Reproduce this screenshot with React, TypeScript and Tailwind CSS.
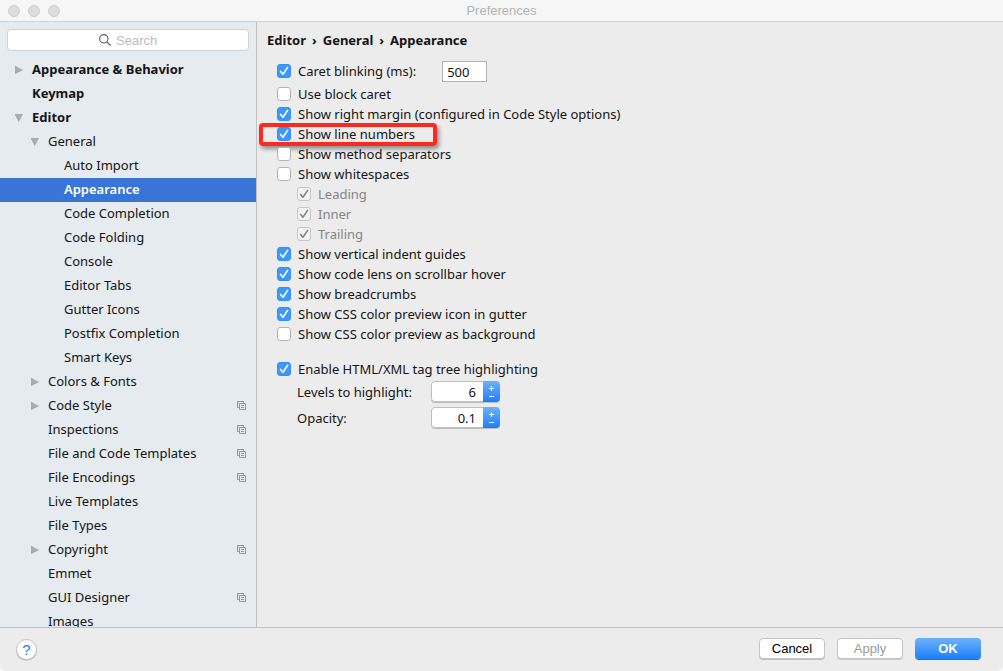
import React, { useState } from 'react';
import clsx from 'clsx';

interface TreeNode {
  label: string;
  level: 0 | 1 | 2;
  arrow?: 'open' | 'closed';
  project?: boolean;
}

const tree: TreeNode[] = [
  { label: 'Appearance & Behavior', level: 0, arrow: 'closed' },
  { label: 'Keymap', level: 0 },
  { label: 'Editor', level: 0, arrow: 'open' },
  { label: 'General', level: 1, arrow: 'open' },
  { label: 'Auto Import', level: 2 },
  { label: 'Appearance', level: 2 },
  { label: 'Code Completion', level: 2 },
  { label: 'Code Folding', level: 2 },
  { label: 'Console', level: 2 },
  { label: 'Editor Tabs', level: 2 },
  { label: 'Gutter Icons', level: 2 },
  { label: 'Postfix Completion', level: 2 },
  { label: 'Smart Keys', level: 2 },
  { label: 'Colors & Fonts', level: 1, arrow: 'closed' },
  { label: 'Code Style', level: 1, arrow: 'closed', project: true },
  { label: 'Inspections', level: 1, project: true },
  { label: 'File and Code Templates', level: 1, project: true },
  { label: 'File Encodings', level: 1, project: true },
  { label: 'Live Templates', level: 1 },
  { label: 'File Types', level: 1 },
  { label: 'Copyright', level: 1, arrow: 'closed', project: true },
  { label: 'Emmet', level: 1 },
  { label: 'GUI Designer', level: 1, project: true },
  { label: 'Images', level: 1 },
];

const indent = { 0: 'pl-3', 1: 'pl-7', 2: 'pl-11' };

const Arrow: React.FC<{ type?: 'open' | 'closed' }> = ({ type }) => (
  <span className="flex w-5 shrink-0 items-center pl-0.5">
    {type && (
      <svg width="10" height="10" viewBox="0 0 10 10" fill="#a9abad">
        <path d={type === 'open' ? 'M0.5 1h8.5l-4.25 8z' : 'M1 0.8v8.4l8-4.2z'} />
      </svg>
    )}
  </span>
);

const ProjectIcon = () => (
  <svg width="10" height="10" viewBox="0 0 10 10" fill="none" className="shrink-0">
    <path d="M2 6.5H0.5v-6h6V2" stroke="#6c9fc0" />
    <path d="M2.5 2.5h6v6h-6z" stroke="#96999c" />
    <path d="M4 4.5h3M4 6.5h3" stroke="#96999c" />
  </svg>
);

interface CheckProps {
  label: string;
  checked?: boolean;
  disabled?: boolean;
  children?: React.ReactNode;
}

const Check: React.FC<CheckProps> = ({ label, checked = false, disabled = false, children }) => {
  const [on, setOn] = useState(checked);

  return (
    <label className={clsx('relative flex h-5 w-fit items-center gap-[7px]', disabled && 'ml-5 text-[#858585]')}>
      <span className="grid size-3.5">
        <input
          type="checkbox"
          checked={on}
          disabled={disabled}
          onChange={() => setOn(!on)}
          className="col-start-1 row-start-1 size-3.5 appearance-none rounded-[3px] border border-[#b4b4b4] bg-white checked:border-[#3a90f2] checked:bg-[#3b99fc] disabled:border-[#c6c6c6] disabled:bg-[#f3f3f3]"
        />
        {on && (
          <svg viewBox="0 0 14 14" fill="none" className="pointer-events-none col-start-1 row-start-1 size-3.5">
            <path
              d="M3.6 7.4L6 10.2L10.6 3.4"
              stroke={disabled ? '#858585' : '#fff'}
              strokeWidth="1.6"
              strokeLinecap="round"
              strokeLinejoin="round"
            />
          </svg>
        )}
      </span>
      {label}
      {children}
    </label>
  );
};

const Spinner: React.FC<{ id: string; label: string; initial: number; step: number }> = ({ id, label, initial, step }) => {
  const [value, setValue] = useState(initial);
  const change = (delta: number) => setValue(Math.max(0, Math.round((value + delta) * 10) / 10));

  return (
    <div className="flex items-center pl-5">
      <label htmlFor={id} className="w-[134px]">{label}</label>
      <div className="flex h-[21px] w-[69px] overflow-hidden rounded-[4px] shadow-[0_1px_0_#bdbdbd]">
        <input
          id={id}
          value={value}
          onChange={(e) => setValue(Number(e.target.value) || 0)}
          className="w-[52px] rounded-l-[4px] border border-r-0 border-[#bfbfbf] bg-white pr-[7px] text-right outline-none"
        />
        <div className="flex w-[17px] flex-col bg-linear-to-b from-[#6bb2fa] to-[#167efb] pt-[3px] pb-0.5 text-white">
          <button aria-label={`Increase ${label}`} className="flex flex-1 items-center justify-center" onClick={() => change(step)}>
            <svg width="7" height="7" viewBox="0 0 7 7" stroke="currentColor"><path d="M1 3.5h5M3.5 1v5" /></svg>
          </button>
          <button aria-label={`Decrease ${label}`} className="flex flex-1 items-center justify-center" onClick={() => change(-step)}>
            <svg width="7" height="7" viewBox="0 0 7 7" stroke="currentColor"><path d="M1 3.5h5" /></svg>
          </button>
        </div>
      </div>
    </div>
  );
};

const App: React.FC = () => {
  const [selected, setSelected] = useState('Appearance');
  const [blink, setBlink] = useState('500');

  return (
    <div className="flex h-screen flex-col overflow-hidden rounded-b-[5px] bg-[#ececec] font-['Noto_Sans',sans-serif] text-[13px] leading-5 text-[#141414]">
      <header className="grid h-[22px] shrink-0 grid-cols-[1fr_auto_1fr] items-center border-b border-[#d1d1d1] bg-[#f6f6f6] px-2">
        <div className="flex gap-2">
          {['Close', 'Minimize', 'Zoom'].map((name) => (
            <button key={name} aria-label={name} className="size-3 rounded-full border border-[#cdcdcd] bg-[#dddddd]" />
          ))}
        </div>
        <h1 className="pt-px font-['Liberation_Sans',Arial,sans-serif] text-[13px] text-[#b3b3b3]">Preferences</h1>
      </header>

      <div className="flex min-h-0 flex-1">
        <aside className="flex w-[257px] shrink-0 flex-col border-r border-[#c2c2c2] bg-[#e6ebef]">
          <label className="m-[7px] flex h-[22px] shrink-0 items-center justify-center gap-[5px] rounded-[4px] border border-[#cfd1d3] bg-white pl-[3px]">
            <svg width="12" height="12" viewBox="0 0 12 12" fill="none" stroke="#5c5c5c" strokeWidth="1.1">
              <circle cx="4.8" cy="4.8" r="4.2" />
              <path d="M7.9 7.9l3.6 3.6" />
            </svg>
            <input
              aria-label="Search"
              placeholder="Search"
              className="w-11 bg-transparent pt-px font-['Liberation_Sans',Arial,sans-serif] text-[13px] outline-none placeholder:text-[#bcbcbc]"
            />
          </label>
          <nav className="min-h-0 flex-1 overflow-y-auto [scrollbar-width:none]">
            {tree.map((node) => (
              <button
                key={node.label}
                onClick={() => setSelected(node.label)}
                className={clsx(
                  'flex h-6 w-full items-center pr-[9px] text-left',
                  indent[node.level],
                  node.level === 0 && 'font-bold',
                  selected === node.label && 'bg-[#3875d7] font-semibold text-white'
                )}
              >
                <Arrow type={node.arrow} />
                <span className="flex-1 pb-0.5">{node.label}</span>
                {node.project && <ProjectIcon />}
              </button>
            ))}
          </nav>
        </aside>

        <main className="min-w-0 flex-1 overflow-hidden px-2.5 pt-2">
          <h2 className="flex gap-1.5 font-bold">
            <span>Editor</span>
            <span>›</span>
            <span>General</span>
            <span>›</span>
            <span>Appearance</span>
          </h2>
          <div className="mt-[11px] pl-2.5">
            <div className="mb-0.5 flex h-[21px] items-start gap-[26px]">
              <Check label="Caret blinking (ms):" checked />
              <input
                aria-label="Caret blinking (ms)"
                value={blink}
                onChange={(e) => setBlink(e.target.value)}
                className="h-[21px] w-[45px] border border-[#b3b3b3] bg-white px-1 outline-none"
              />
            </div>
            <Check label="Use block caret" />
            <Check label="Show right margin (configured in Code Style options)" checked />
            <Check label="Show line numbers" checked>
              <span className="pointer-events-none absolute -top-px -left-[18px] h-[23px] w-[178px] rounded-[4px] border-4 border-[#fb2a20] shadow-[2px_3px_4px_rgba(0,0,0,0.4)]" />
            </Check>
            <Check label="Show method separators" />
            <Check label="Show whitespaces" />
            <Check label="Leading" checked disabled />
            <Check label="Inner" checked disabled />
            <Check label="Trailing" checked disabled />
            <Check label="Show vertical indent guides" checked />
            <Check label="Show code lens on scrollbar hover" checked />
            <Check label="Show breadcrumbs" checked />
            <Check label="Show CSS color preview icon in gutter" checked />
            <Check label="Show CSS color preview as background" />
            <div className="mt-[15px] mb-0.5">
              <Check label="Enable HTML/XML tag tree highlighting" checked />
            </div>
            <div className="flex flex-col gap-[5px]">
              <Spinner id="levels" label="Levels to highlight:" initial={6} step={1} />
              <Spinner id="opacity" label="Opacity:" initial={0.1} step={0.1} />
            </div>
          </div>
        </main>
      </div>

      <footer className="flex h-11 shrink-0 items-center border-t border-[#c2c2c2] pr-[22px] pl-4 font-['Liberation_Sans',Arial,sans-serif]">
        <button aria-label="Help" className="size-[21px] rounded-full border border-[#c4c4c4] bg-white text-[15px] leading-[19px] font-medium text-[#1482fa] shadow-[0_1px_0_#c4c4c4]">
          ?
        </button>
        <div className="ml-auto flex gap-3 pb-0.5">
          <button className="h-[21px] w-[66px] rounded-[4px] border border-[#c4c4c4] bg-white text-black shadow-[0_1px_0_#c0c0c0]">Cancel</button>
          <button disabled className="h-[21px] w-[66px] rounded-[4px] border border-[#c4c4c4] bg-white text-[#9a9a9a] shadow-[0_1px_0_#c8c8c8]">Apply</button>
          <button className="h-[21px] w-[66px] rounded-[4px] bg-linear-to-b from-[#6bb2fa] to-[#167efb] font-bold text-white shadow-[0_1px_0_#1a6fe0]">OK</button>
        </div>
      </footer>
    </div>
  );
};

export default App;
